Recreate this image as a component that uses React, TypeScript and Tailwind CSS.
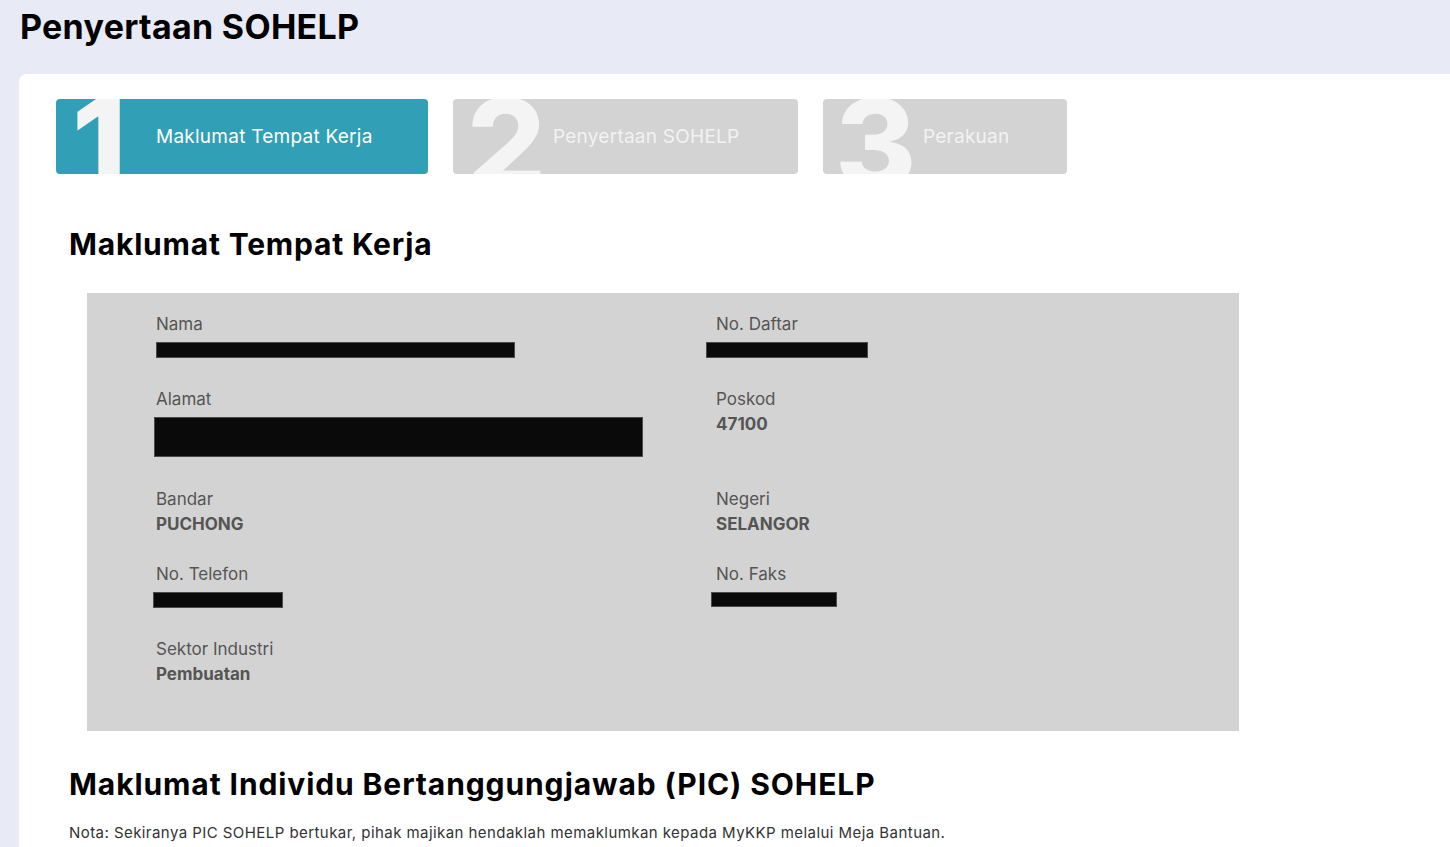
import React from "react";

type Field = {
  label: string;
  value?: string;
  redact?: { w: number; h: number; ml?: number };
};

const fields: Field[] = [
  { label: "Nama", redact: { w: 359, h: 16 } },
  { label: "No. Daftar", redact: { w: 162, h: 16, ml: -10 } },
  { label: "Alamat", redact: { w: 489, h: 40, ml: -2 } },
  { label: "Poskod", value: "47100" },
  { label: "Bandar", value: "PUCHONG" },
  { label: "Negeri", value: "SELANGOR" },
  { label: "No. Telefon", redact: { w: 130, h: 16, ml: -3 } },
  { label: "No. Faks", redact: { w: 126, h: 15, ml: -5 } },
  { label: "Sektor Industri", value: "Pembuatan" },
];

const steps = [
  { n: "1", label: "Maklumat Tempat Kerja", active: true, w: "w-[372px]", pad: "pl-[16px]" },
  { n: "2", label: "Penyertaan SOHELP", active: false, w: "w-[345px]", pad: "pl-[14px]" },
  { n: "3", label: "Perakuan", active: false, w: "w-[244px]", pad: "pl-[12px]" },
];

function Redacted({ w, h, ml = 0 }: { w: number; h: number; ml?: number }) {
  return (
    <div className="flex items-center" style={{ height: h > 25 ? 50 : 25 }}>
      <div
        className="border border-[#4a4a4a] bg-[#0a0a0a]"
        style={{ width: w, height: h, marginLeft: ml }}
      />
    </div>
  );
}

export default function App() {
  return (
    <div
      className="flex min-h-screen flex-col bg-[#e8ebf5] text-black"
      style={{ fontFamily: "Inter, Roboto, 'Noto Sans', sans-serif" }}
    >
      <h1 className="px-[20px] pt-[7px] text-[34px] font-bold leading-[40px] tracking-[0.3px]">
        Penyertaan SOHELP
      </h1>

      <div className="ml-[19px] mt-[27px] flex flex-1 flex-col rounded-tl-lg bg-white pb-4">
        {/* Steps */}
        <div className="flex gap-[25px] pl-[37px] pt-[25px]">
          {steps.map((s) => (
            <div
              key={s.n}
              className={`flex h-[75px] items-center overflow-hidden rounded ${s.w} ${
                s.active ? "bg-[#319fb5]" : "bg-[#d3d3d3]"
              }`}
            >
              <div className={`flex h-full w-[100px] shrink-0 items-center ${s.pad}`}>
                <span className="translate-y-[6px] text-[124px] font-extrabold leading-none text-[#f4f4f4]">
                  {s.n}
                </span>
              </div>
              <span
                className={`text-[19px] leading-none tracking-[0.25px] ${
                  s.active ? "text-white" : "text-[#f2f2f2]"
                }`}
              >
                {s.label}
              </span>
            </div>
          ))}
        </div>

        <h2 className="ml-[50px] mt-[52px] text-[30px] font-bold leading-[36px] tracking-[0.8px]">
          Maklumat Tempat Kerja
        </h2>

        {/* Info box */}
        <div className="ml-[68px] mt-[31px] w-[1152px] bg-[#d3d3d3] pb-[44px] pl-[69px] pt-[19px]">
          <div className="grid grid-cols-[560px_1fr] gap-y-[25px] text-[17px] leading-[25px] text-[#555]">
            {fields.map((f) => (
              <div key={f.label}>
                <div>{f.label}</div>
                {f.value ? (
                  <div className="font-bold">{f.value}</div>
                ) : f.redact ? (
                  <Redacted {...f.redact} />
                ) : null}
              </div>
            ))}
          </div>
        </div>

        <h2 className="ml-[50px] mt-[35px] text-[30px] font-bold leading-[36px] tracking-[0.9px]">
          Maklumat Individu Bertanggungjawab (PIC) SOHELP
        </h2>
        <p className="ml-[50px] mt-[21px] text-[15px] leading-[20px] tracking-[0.44px] text-[#333]">
          Nota: Sekiranya PIC SOHELP bertukar, pihak majikan hendaklah memaklumkan kepada MyKKP
          melalui Meja Bantuan.
        </p>
      </div>
    </div>
  );
}
